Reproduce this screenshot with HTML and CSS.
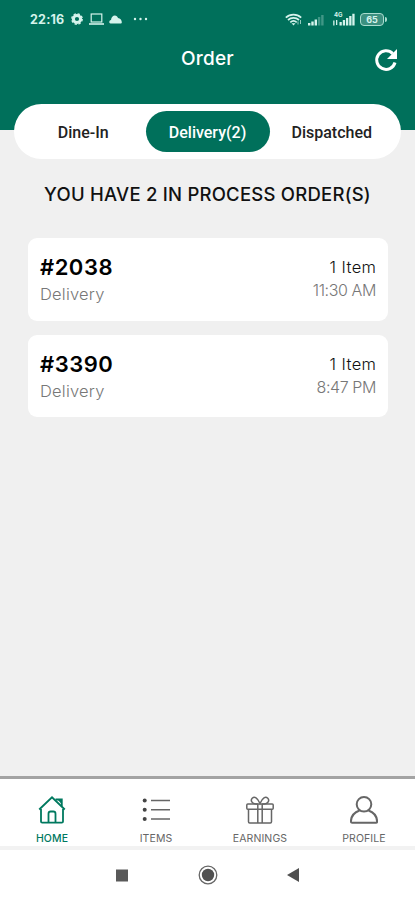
FILE: index.html
```html
<!DOCTYPE html>
<html lang="en">
<head>
    <meta charset="UTF-8">
    <meta name="viewport" content="width=device-width, initial-scale=1.0">
    <title>Order</title>
    <link rel="stylesheet" href="styles.css">
</head>
<body>
    <header class="header">
        <div class="status">
            <div class="status__left">
                <span class="status__time">22:16</span>
                <svg class="status__gear" width="12" height="12" viewBox="0 0 12 12">
                    <circle cx="6" cy="6" r="3.6" fill="none" stroke="currentColor" stroke-width="3"/>
                    <circle cx="6" cy="6" r="5.2" fill="none" stroke="currentColor" stroke-width="1.4" stroke-dasharray="2.3 1.78"/>
                </svg>
                <svg class="status__laptop" width="15" height="12" viewBox="0 0 15 12">
                    <rect x="2.2" y="1" width="10.6" height="8" fill="none" stroke="currentColor" stroke-width="1.2"/>
                    <path d="M0 11h15" stroke="currentColor" stroke-width="1.6"/>
                </svg>
                <svg class="status__cloud" width="13" height="9" viewBox="0 0 13 9">
                    <path d="M1.500 8.500C-.3 8.300-.2 5.500 2 5 2.300 2 4 .5 5.800.5c1.700 0 2.700 1.300 3.200 2.500 2.300.3 3.500 2 3.800 4 .1 1-.4 1.500-1.300 1.500z" fill="currentColor"/>
                </svg>
                <svg class="status__dots" width="15" height="4" viewBox="0 0 15 4" fill="currentColor">
                    <circle cx="2" cy="2" r="1.2"/>
                    <circle cx="7.500" cy="2" r="1.200"/>
                    <circle cx="13" cy="2" r="1.200"/>
                </svg>
            </div>
            <div class="status__right">
                <svg class="status__wifi" width="18" height="13" viewBox="0 0 18 13" fill="none" stroke="currentColor">
                    <path d="M.8 4.600a11.500 11.500 0 0 1 15.400 0M3 7a8.200 8.200 0 0 1 11 0M5.300 9.300a4.800 4.800 0 0 1 6.400 0" stroke-width="1.700"/>
                    <path d="M6.500 10.200h4l-2 2.300z" fill="currentColor" stroke="none"/>
                    <path d="M13 11.500v-3M15.500 7v4" stroke-width="1" opacity=".7"/>
                </svg>
                <svg class="status__signal" width="16" height="12" viewBox="0 0 16 12" fill="currentColor">
                    <path d="M0 9h2.400v2.500H0zM3.300 7.500h2.400v4H3.300zM6.600 5.500H9v6H6.600z"/>
                    <path d="M9.900 3h2.400v8.500H9.900zM13.200 1h2.400v10.500h-2.400z" opacity=".3"/>
                </svg>
                <span class="status__mobile">
                    <svg width="23" height="13" viewBox="0 0 23 13" fill="currentColor">
                        <path d="M1.200 7.500h1.300v5H1.200zM4 7h1.300v5H4zM7.500 9h2.300v3.500H7.500zM10.800 7h2.300v5.500h-2.300zM14 5h2.300v7.500H14zM17.200 3h2.300v9.500h-2.300zM20.300.8h2.300v11.700h-2.300z"/>
                    </svg>
                    <span class="status__4g">4G</span>
                </span>
                <span class="status__battery">65</span>
            </div>
        </div>
        <div class="header__bar">
            <h1 class="header__title">Order</h1>
            <svg class="header__refresh" width="24" height="24" viewBox="0 0 24 24" fill="none">
                <path d="M21 14.500A9.300 9.300 0 1 1 18.700 5.600" stroke="#fff" stroke-width="3"/>
                <path d="M23 1v10H13z" fill="#fff"/>
            </svg>
        </div>
    </header>

    <main class="orders">
        <div class="tabs">
            <div class="tabs__item">Dine-In</div>
            <div class="tabs__item tabs__item--active">Delivery(2)</div>
            <div class="tabs__item">Dispatched</div>
        </div>
        <h2 class="orders__title">YOU HAVE 2 IN PROCESS ORDER(S)</h2>
        <div class="orders__list">
            <div class="card">
                <div class="card__info">
                    <div class="card__number">#2038</div>
                    <div class="card__type">Delivery</div>
                </div>
                <div class="card__details">
                    <div class="card__count">1 Item</div>
                    <div class="card__time">11:30 AM</div>
                </div>
            </div>
            <div class="card">
                <div class="card__info">
                    <div class="card__number">#3390</div>
                    <div class="card__type">Delivery</div>
                </div>
                <div class="card__details">
                    <div class="card__count">1 Item</div>
                    <div class="card__time">8:47 PM</div>
                </div>
            </div>
        </div>
    </main>

    <nav class="menu">
        <div class="menu__item menu__item--active">
            <svg class="menu__icon menu__icon--home" viewBox="0 0 28 28">
                <path d="M3 13v12.500q0 1.200 1.200 1.200h19.600q1.200 0 1.200-1.200V13M1.200 13.500 14 1.300l12.800 12.200"/>
                <path d="M10.500 26.500v-8.800q0-2.200 2.200-2.200h2.600q2.200 0 2.200 2.200v8.800"/>
                <path d="M17.500 3.500h6.300v6.800"/>
                <path d="M20 4h3.500v4z" fill="currentColor" stroke="none"/>
            </svg>
            <span class="menu__label">HOME</span>
        </div>
        <div class="menu__item">
            <svg class="menu__icon" viewBox="0 0 28 28">
                <path d="M9 4.500h19M9 13.800h19M9 23h19"/>
                <g fill="#444" stroke="none">
                    <circle cx="2.700" cy="4.500" r="2"/>
                    <circle cx="2.700" cy="13.800" r="2"/>
                    <circle cx="2.700" cy="23" r="2"/>
                </g>
            </svg>
            <span class="menu__label">ITEMS</span>
        </div>
        <div class="menu__item">
            <svg class="menu__icon" viewBox="0 0 28 28">
                <rect x=".8" y="8" width="26.400" height="5.200" rx="1"/>
                <path d="M2.500 13.200v12.500q0 1.200 1.200 1.200h20.600q1.200 0 1.200-1.200V13.200M11.800 8v18.900M16.200 8v18.900"/>
                <path d="M11.800 8C5 8 4.500 4 6.200 2.200 8.500.1 11.500 1.500 14 7.500c2.500-6 5.500-7.400 7.800-5.300C23.500 4 23 8 16.200 8"/>
            </svg>
            <span class="menu__label">EARNINGS</span>
        </div>
        <div class="menu__item">
            <svg class="menu__icon menu__icon--profile" viewBox="0 0 28 28">
                <circle cx="14" cy="8.300" r="7.300"/>
                <path d="M9.500 14.500C4 16.500 1 20.500.9 25.500q0 1.300 1.200 1.300h23.800q1.200 0 1.200-1.300c-.1-5-3.100-9-8.600-11"/>
            </svg>
            <span class="menu__label">PROFILE</span>
        </div>
    </nav>

    <div class="system">
        <svg width="12" height="13" viewBox="0 0 12 13"><path d="M0 .5h12v12H0z" fill="#595959"/></svg>
        <svg width="20" height="20" viewBox="0 0 20 20">
            <circle cx="10" cy="10" r="8.800" fill="none" stroke="#666" stroke-width="1.300"/>
            <circle cx="10" cy="10" r="6.200" fill="#505050"/>
        </svg>
        <svg width="12" height="14" viewBox="0 0 12 14"><path d="M0 7 12 0v14z" fill="#505050"/></svg>
    </div>
</body>
</html>
```
FILE: styles.css
```css
* {
    margin: 0;
    padding: 0;
    box-sizing: border-box;
}

body {
    height: 900px;
    display: flex;
    flex-direction: column;
    background-color: #f0f0f0;
    font-family: Inter, "Open Sans", sans-serif;
    overflow: hidden;
}

svg {
    display: block;
    flex: none;
}

.header {
    height: 130px;
    flex: none;
    background-color: #00705b;
    color: #fff;
}

.status {
    height: 38px;
    padding: 0 27px 0 30px;
    display: flex;
    justify-content: space-between;
    align-items: center;
    color: #d5f3ec;
}

.status__left,
.status__right {
    display: flex;
    align-items: center;
}

.status__time {
    width: 41px;
    font-size: 12.5px;
    font-weight: 700;
    letter-spacing: 0.2px;
}

.status__laptop {
    margin-left: 6px;
}

.status__cloud {
    margin-left: 5px;
}

.status__dots {
    margin-left: 11px;
}

.status__signal {
    margin-left: 5px;
    margin-top: 2px;
}

.status__mobile {
    position: relative;
    margin-left: 8px;
}

.status__4g {
    position: absolute;
    top: -1px;
    left: 2px;
    font-size: 6px;
    line-height: 6px;
    font-weight: 700;
}

.status__battery {
    position: relative;
    width: 24px;
    height: 13px;
    margin-left: 5px;
    margin-right: 4px;
    border: 1.5px solid #a9dccf;
    border-radius: 4px;
    background-color: #3c9080;
    font-size: 9px;
    line-height: 11px;
    font-weight: 700;
    text-align: center;
}

.status__battery::after {
    content: '';
    position: absolute;
    top: 3px;
    right: -4px;
    width: 2px;
    height: 5px;
    border-radius: 0 2px 2px 0;
    background-color: #a9dccf;
}

.header__bar {
    height: 44px;
    padding: 0 17px;
    display: grid;
    grid-template-columns: 24px 1fr 24px;
    align-items: center;
}

.header__title {
    grid-column: 2;
    padding-bottom: 3px;
    font-size: 19px;
    line-height: 24px;
    font-weight: 500;
    letter-spacing: 0.2px;
    text-align: center;
}

.orders {
    flex: 1;
    padding: 0 14px;
}

.tabs {
    position: relative;
    height: 55px;
    margin-top: -26px;
    padding: 0 7px;
    display: grid;
    grid-template-columns: 1fr 124px 1fr;
    align-items: center;
    border-radius: 28px;
    background-color: #fff;
}

.tabs__item {
    height: 41px;
    border-radius: 21px;
    font-family: Roboto, sans-serif;
    font-size: 16px;
    line-height: 43px;
    font-weight: 500;
    text-align: center;
    color: #222;
}

.tabs__item--active {
    background-color: #00705b;
    color: #fff;
}

.orders__title {
    margin-top: 23px;
    font-size: 18.5px;
    line-height: 25px;
    font-weight: 500;
    letter-spacing: 0.23px;
    text-align: center;
    white-space: nowrap;
    color: #111;
}

.orders__list {
    margin-top: 31px;
    padding: 0 13px 0 14px;
    display: flex;
    flex-direction: column;
    gap: 14px;
}

.card {
    height: 82.5px;
    padding: 15px 12px 0 12px;
    display: flex;
    justify-content: space-between;
    border-radius: 9px;
    background-color: #fff;
}

.card__number {
    font-size: 22px;
    line-height: 28px;
    font-weight: 600;
    letter-spacing: 0.5px;
    color: #000;
}

.card__type {
    font-size: 16.5px;
    line-height: 26px;
    font-weight: 300;
    letter-spacing: 0.2px;
    color: #777;
}

.card__details {
    padding-top: 3px;
    font-size: 16px;
    line-height: 23px;
    font-weight: 300;
    text-align: right;
}

.card__count {
    font-size: 16.5px;
    letter-spacing: 0.4px;
    margin-right: -0.4px;
    color: #111;
}

.card__time {
    letter-spacing: -0.4px;
    color: #777;
}

.menu {
    height: 74px;
    flex: none;
    display: grid;
    grid-template-columns: repeat(4, 104px);
    border-top: 3px solid #a3a3a3;
    border-bottom: 4px solid #f2f2f2;
    background-color: #fff;
}

.menu__item {
    padding-top: 17px;
    display: flex;
    flex-direction: column;
    align-items: center;
    color: #666;
}

.menu__item--active {
    color: #00795f;
}

.menu__icon {
    width: 28px;
    height: 28px;
    fill: none;
    stroke: currentColor;
    stroke-width: 1.5;
}

.menu__icon--home {
    stroke-width: 1.8;
}

.menu__icon--profile {
    stroke-width: 2;
}

.menu__label {
    margin-top: 8px;
    font-size: 10.5px;
    line-height: 14px;
    letter-spacing: 0.1px;
}

.menu__item--active .menu__label {
    font-weight: 500;
}

.system {
    height: 50px;
    flex: none;
    padding: 0 116px;
    display: flex;
    justify-content: space-between;
    align-items: center;
    background-color: #fff;
}
```
